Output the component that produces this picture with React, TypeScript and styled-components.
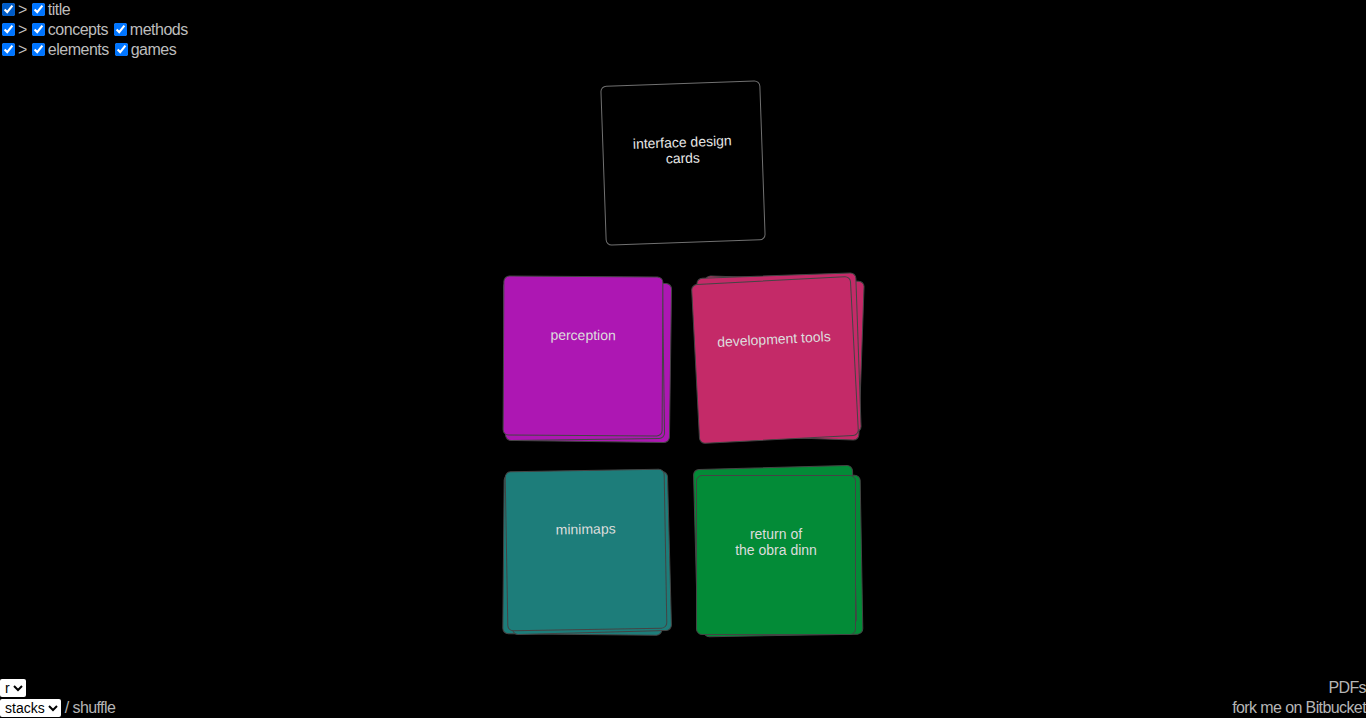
import styled, { createGlobalStyle } from "styled-components";

const GlobalStyle = createGlobalStyle`
  html, body {
    margin: 0;
    padding: 0;
    background: #000;
    color: #bbb;
    font-family: "Liberation Sans", Arial, sans-serif;
    font-weight: 300;
  }
`;

const Page = styled.div`
  height: 100vh;
  display: flex;
  flex-direction: column;
  overflow: hidden;
`;

const Filters = styled.div`
  display: flex;
  flex-direction: column;
  font-size: 16px;
  line-height: 20px;
  letter-spacing: -0.5px;
  color: #bdbdbd;
`;

const FilterRow = styled.label`
  display: flex;
  align-items: center;
  height: 20px;
  white-space: pre;
`;

const Check = styled.input.attrs({ type: "checkbox", defaultChecked: true })`
  width: 13px;
  height: 13px;
  margin: 0 3px 1px 2px;
`;

const Arrow = styled.span`
  margin: 0 3px 0 0;
`;

const Table = styled.main`
  flex: 1;
  display: flex;
  flex-direction: column;
  align-items: center;
  padding-top: 23px;
  gap: 34px;
`;

const Grid = styled.div`
  display: grid;
  grid-template-columns: 160px 160px;
  column-gap: 32px;
  row-gap: 34px;
`;

const Stack = styled.div`
  position: relative;
  width: 160px;
  height: 160px;
`;

const Card = styled.div<{ $bg: string; $border: string; $color: string }>`
  position: absolute;
  inset: 0;
  box-sizing: border-box;
  border: 1px solid ${(p) => p.$border};
  border-radius: 6px;
  background: ${(p) => p.$bg};
  color: ${(p) => p.$color};
  padding: 50px 14px 0;
  font-size: 14px;
  line-height: 16px;
  font-weight: 400;
  text-align: center;
`;

const Footer = styled.footer`
  display: flex;
  justify-content: space-between;
  align-items: flex-end;
  font-size: 16px;
  letter-spacing: -0.6px;
`;

const FooterCol = styled.div<{ $align: string }>`
  display: flex;
  flex-direction: column;
  align-items: ${(p) => p.$align};
`;

const FooterRow = styled.div`
  display: flex;
  align-items: center;
  height: 20px;
  white-space: pre;
  color: #b5b5b5;
`;

const Select = styled.select`
  font-family: "Liberation Sans", Arial, sans-serif;
  font-size: 14px;
  letter-spacing: 0;
  height: 18px;
  margin: 0;
  padding: 0 0 0 1px;
  border: none;
  border-radius: 2px;
  background: #fff;
  color: #000;
`;

type Layer = { x: number; y: number; r: number };

const stacks: {
  label: React.ReactNode;
  bg: string;
  layers: Layer[];
}[] = [
  {
    label: "perception",
    bg: "#ad17b3",
    layers: [
      { x: 4, y: 5, r: 0.8 },
      { x: -3, y: 3, r: -0.8 },
      { x: -4, y: -1, r: 0.3 },
    ],
  },
  {
    label: "development tools",
    bg: "#c42a68",
    layers: [
      { x: 3, y: 1, r: 2 },
      { x: 0, y: -2, r: -2 },
      { x: -4, y: 3, r: -3 },
    ],
  },
  {
    label: "minimaps",
    bg: "#1d7d7a",
    layers: [
      { x: -4, y: 4, r: 0.5 },
      { x: 3, y: 2, r: -1.5 },
      { x: -1, y: -1, r: -1 },
    ],
  },
  {
    label: (
      <>
        return of
        <br />
        the obra dinn
      </>
    ),
    bg: "#038b37",
    layers: [
      { x: 3, y: 5, r: -1 },
      { x: -4, y: -4, r: -1.5 },
      { x: -3, y: 4, r: 0 },
    ],
  },
];

export default function App() {
  return (
    <Page>
      <GlobalStyle />
      <Filters>
        <FilterRow>
          <Check />
          <Arrow>{">"}</Arrow>
          <Check />
          title
        </FilterRow>
        <FilterRow>
          <Check />
          <Arrow>{">"}</Arrow>
          <Check />
          {"concepts "}
          <Check />
          methods
        </FilterRow>
        <FilterRow>
          <Check />
          <Arrow>{">"}</Arrow>
          <Check />
          {"elements "}
          <Check />
          games
        </FilterRow>
      </Filters>

      <Table>
        <Stack>
          <Card
            $bg="#000"
            $border="#707070"
            $color="#e6e6e6"
            style={{ transform: "rotate(-2deg)" }}
          >
            interface design cards
          </Card>
        </Stack>
        <Grid>
          {stacks.map((s, i) => (
            <Stack key={i}>
              {s.layers.map((l, j) => (
                <Card
                  key={j}
                  $bg={s.bg}
                  $border="#444"
                  $color="#ddd"
                  style={{
                    transform: `translate(${l.x}px, ${l.y}px) rotate(${l.r}deg)`,
                  }}
                >
                  {j === s.layers.length - 1 ? s.label : null}
                </Card>
              ))}
            </Stack>
          ))}
        </Grid>
      </Table>

      <Footer>
        <FooterCol $align="flex-start">
          <FooterRow>
            <Select defaultValue="r">
              <option value="r">r</option>
            </Select>
          </FooterRow>
          <FooterRow>
            <Select defaultValue="stacks">
              <option value="stacks">stacks</option>
            </Select>
            {" / shuffle"}
          </FooterRow>
        </FooterCol>
        <FooterCol $align="flex-end">
          <FooterRow>PDFs</FooterRow>
          <FooterRow>fork me on Bitbucket</FooterRow>
        </FooterCol>
      </Footer>
    </Page>
  );
}
